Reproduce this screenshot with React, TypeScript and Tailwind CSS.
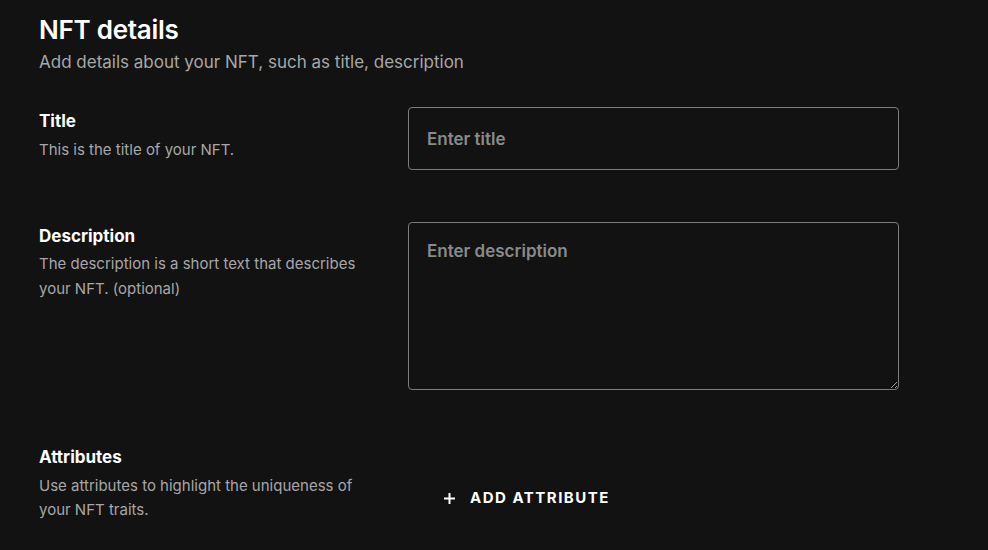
import React from "react";

export default function App() {
  const font = { fontFamily: "Inter, 'Noto Sans', sans-serif" };
  return (
    <div
      className="w-[988px] h-[550px] bg-[#121212] text-white overflow-hidden pl-[39px] pt-[13px] [color-scheme:dark]"
      style={font}
    >
      <div className="flex flex-col">
        <h1 className="text-[26px] leading-[34px] font-semibold tracking-[-0.01em]">NFT details</h1>
        <p className="mt-[3px] text-[17px] leading-[24px] text-[#a7a7a7]">
          Add details about your NFT, such as title, description
        </p>
      </div>

      <div className="mt-[33px] flex flex-col gap-[52px]">
        <div className="flex items-start">
          <div className="w-[369px] pt-[2px]">
            <div className="text-[17px] leading-[24px] font-bold">Title</div>
            <div className="mt-[4px] text-[15px] leading-[25px] text-[#a7a7a7]">This is the title of your NFT.</div>
          </div>
          <input
            placeholder="Enter title"
            className="w-[491px] h-[63px] rounded-[4px] border border-[#7c7c7c] bg-[#121212] px-[18px] text-[17px] font-semibold text-white placeholder:text-[#8a8a8a] outline-none"
          />
        </div>

        <div className="flex items-start">
          <div className="w-[369px] pt-[2px]">
            <div className="text-[17px] leading-[24px] font-bold">Description</div>
            <div className="mt-[3px] w-[330px] text-[15px] leading-[25px] text-[#a7a7a7]">
              The description is a short text that describes your NFT. (optional)
            </div>
          </div>
          <textarea
            placeholder="Enter description"
            className="w-[491px] h-[168px] rounded-[4px] border border-[#7c7c7c] bg-[#121212] px-[18px] pt-[16px] text-[17px] leading-[24px] font-semibold text-white placeholder:text-[#8a8a8a] outline-none"
          />
        </div>

        <div className="flex items-start">
          <div className="w-[369px] pt-[3px]">
            <div className="text-[17px] leading-[24px] font-bold">Attributes</div>
            <div className="mt-[5px] w-[330px] text-[15px] leading-[24px] text-[#a7a7a7]">
              Use attributes to highlight the uniqueness of your NFT traits.
            </div>
          </div>
          <button className="mt-[38px] ml-[35px] flex items-center gap-[14px] h-[36px] text-[15px] font-bold tracking-[0.1em] text-white">
            <svg width="13" height="13" viewBox="0 0 13 13" fill="none">
              <path d="M6.5 1v11M1 6.5h11" stroke="white" strokeWidth="2" />
            </svg>
            ADD ATTRIBUTE
          </button>
        </div>
      </div>
    </div>
  );
}
